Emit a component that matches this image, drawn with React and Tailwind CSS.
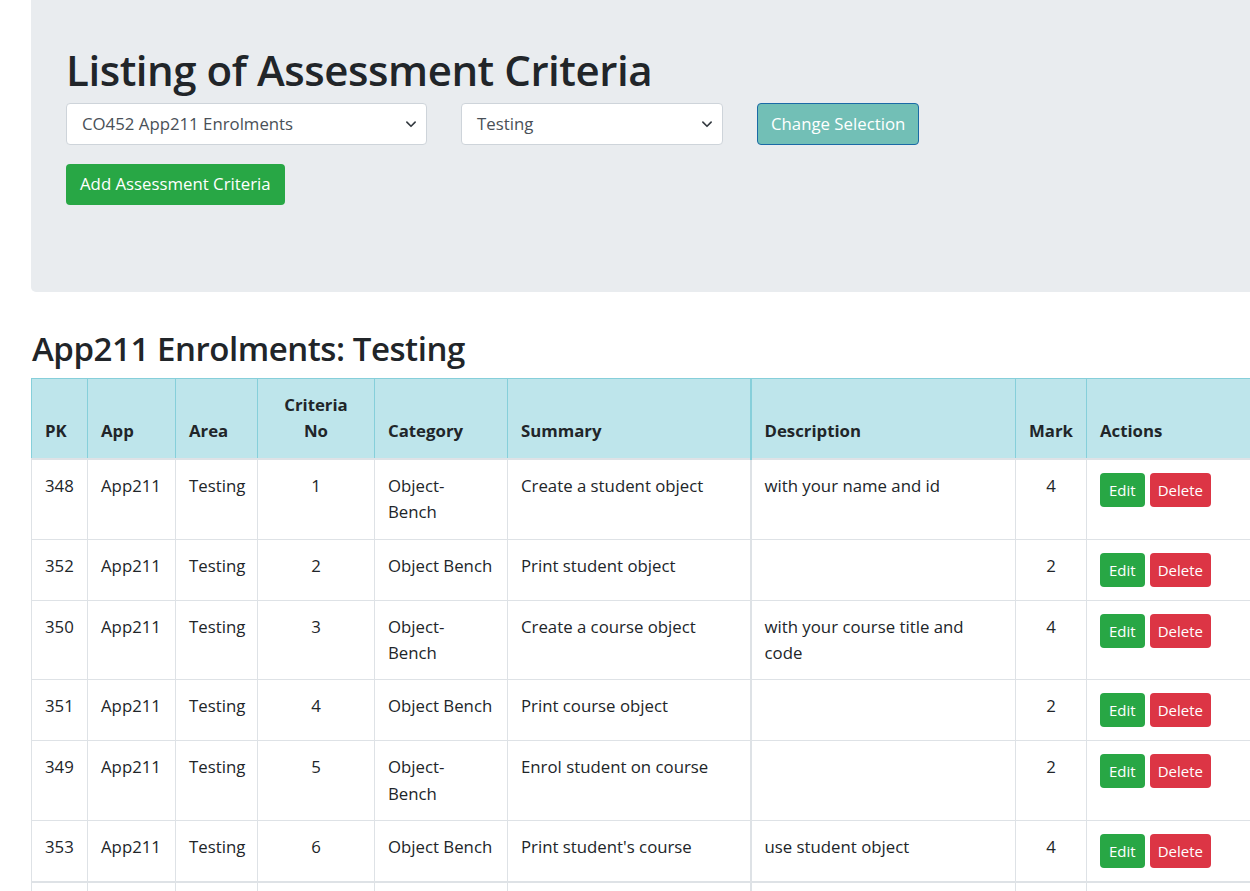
import React from "react";

const rows = [
  { pk: 348, no: 1, cat: "Object-\nBench", sum: "Create a student object", desc: "with your name and id", mark: 4 },
  { pk: 352, no: 2, cat: "Object Bench", sum: "Print student object", desc: "", mark: 2 },
  { pk: 350, no: 3, cat: "Object-\nBench", sum: "Create a course object", desc: "with your course title and code", mark: 4 },
  { pk: 351, no: 4, cat: "Object Bench", sum: "Print course object", desc: "", mark: 2 },
  { pk: 349, no: 5, cat: "Object-\nBench", sum: "Enrol student on course", desc: "", mark: 2 },
  { pk: 353, no: 6, cat: "Object Bench", sum: "Print student's course", desc: "use student object", mark: 4 },
];

function Chevron() {
  return (
    <svg width="12" height="12" viewBox="0 0 16 16" className="shrink-0">
      <path d="M2.5 5.5 8 11l5.5-5.5" fill="none" stroke="#343a40" strokeWidth="2.2" strokeLinecap="round" strokeLinejoin="round" />
    </svg>
  );
}

function Select({ label, w }) {
  return (
    <div className={`${w} h-[42px] bg-white border border-[#ced4da] rounded-[4px] flex items-center justify-between pl-[15px] pr-[9px] text-[16.8px] text-[#495057]`}>
      <span>{label}</span>
      <Chevron />
    </div>
  );
}

const th = "border border-[#86cfda] px-[13px] py-[13px] align-bottom font-bold text-left";
const td = "border border-[#dee2e6] px-[13px] py-[13px] align-top";

export default function App() {
  return (
    <div className="w-[1250px] h-[891px] overflow-hidden bg-white text-[#212529] text-[16.8px] leading-[26.4px]" style={{ fontFamily: '"Open Sans", "Noto Sans", sans-serif' }}>
      <div className="ml-[31px] w-[1260px]">
        <div className="bg-[#e9ecef] rounded-b-[5px] h-[292px] px-[35px] pt-[44px]">
          <h1 className="text-[42px] leading-[52px] font-semibold tracking-[-0.45px]">Listing of Assessment Criteria</h1>
          <div className="flex items-center gap-[34px] mt-[7px]">
            <Select label="CO452 App211 Enrolments" w="w-[361px]" />
            <Select label="Testing" w="w-[262px]" />
            <button className="h-[42px] px-[13px] bg-[#72bfb6] border border-[#1b6aa6] rounded-[4px] text-white text-[16.8px]">Change Selection</button>
          </div>
          <button className="mt-[19px] h-[41px] px-[14px] bg-[#28a745] rounded-[4px] text-white text-[16.8px]">Add Assessment Criteria</button>
        </div>
        <h2 className="mt-[36px] text-[33px] leading-[42px] font-semibold ml-[1px] tracking-[-0.45px]">App211 Enrolments: Testing</h2>
        <table className="mt-[8px] table-fixed border-collapse w-[1260px]">
          <colgroup>
            <col className="w-[56px]" />
            <col className="w-[88px]" />
            <col className="w-[82px]" />
            <col className="w-[117px]" />
            <col className="w-[133px]" />
            <col className="w-[243px]" />
            <col className="w-[265px]" />
            <col className="w-[71px]" />
            <col />
          </colgroup>
          <thead>
            <tr className="bg-[#bee5eb] border-b-2 border-b-[#dee2e6]">
              <th className={th}>PK</th>
              <th className={th}>App</th>
              <th className={th}>Area</th>
              <th className={th} style={{ textAlign: "center" }}>Criteria<br />No</th>
              <th className={th}>Category</th>
              <th className={th}>Summary</th>
              <th className={`${th} border-l-2`}>Description</th>
              <th className={th} style={{ textAlign: "center" }}>Mark</th>
              <th className={th}>Actions</th>
            </tr>
          </thead>
          <tbody>
            {rows.map((r) => (
              <tr key={r.pk}>
                <td className={td}>{r.pk}</td>
                <td className={td}>App211</td>
                <td className={td}>Testing</td>
                <td className={`${td} text-center`}>{r.no}</td>
                <td className={`${td} whitespace-pre-line`}>{r.cat}</td>
                <td className={td}>{r.sum}</td>
                <td className={`${td} border-l-2`}>{r.desc}</td>
                <td className={`${td} text-center`}>{r.mark}</td>
                <td className={td}>
                  <div className="flex gap-[5px]">
                    <button className="h-[34px] px-[9px] bg-[#28a745] rounded-[4px] text-white text-[15px] leading-[20px]">Edit</button>
                    <button className="h-[34px] px-[8px] bg-[#dc3545] rounded-[4px] text-white text-[15px] leading-[20px]">Delete</button>
                  </div>
                </td>
              </tr>
            ))}
          </tbody>
          <tbody className="border-t-2 border-t-[#dee2e6]">
            <tr>
              <td className={td}>&nbsp;</td>
              <td className={td}></td>
              <td className={td}></td>
              <td className={td}></td>
              <td className={td}></td>
              <td className={td}></td>
              <td className={`${td} border-l-2`}></td>
              <td className={td}></td>
              <td className={td}></td>
            </tr>
          </tbody>
        </table>
      </div>
    </div>
  );
}
